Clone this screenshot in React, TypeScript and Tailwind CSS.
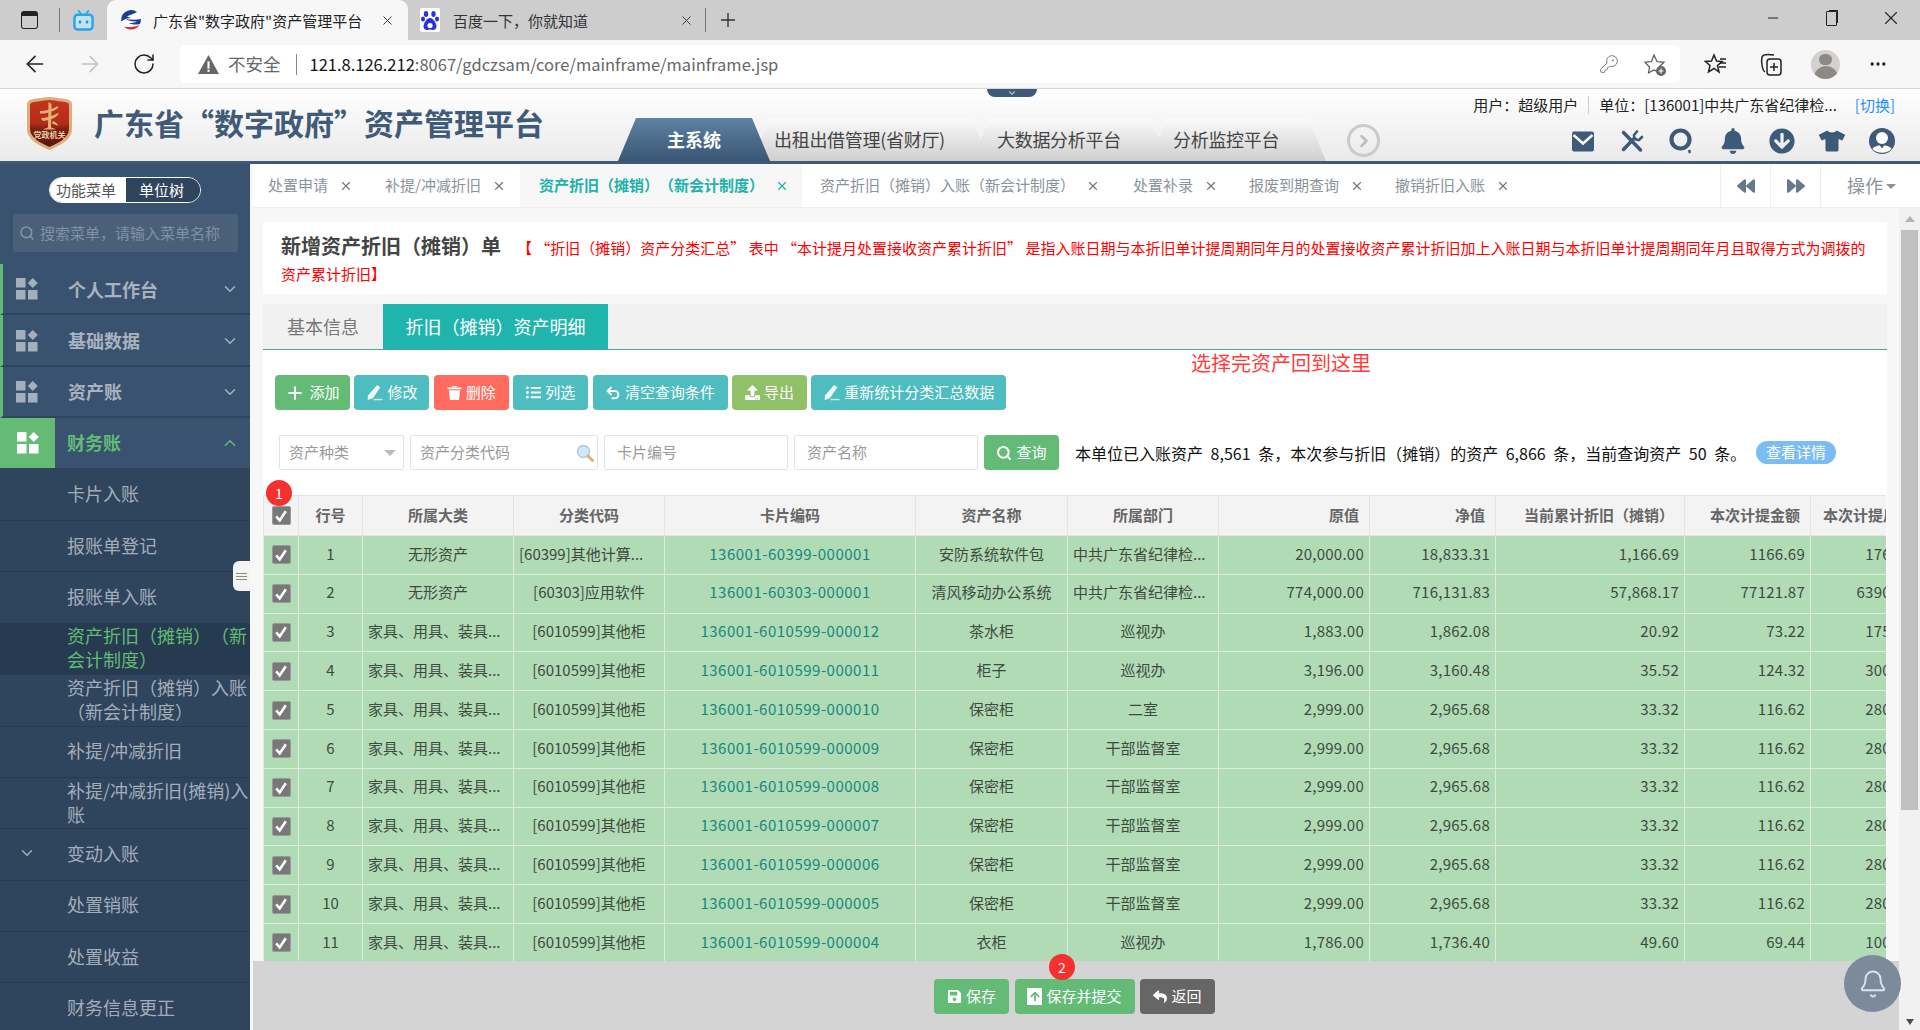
import React from "react";
import { ArrowLeft, ArrowRight, RotateCw, KeyRound, X, Minus, Plus, MoreHorizontal, ChevronDown, ChevronUp, ChevronRight, Search, Bell, Undo2 } from "lucide-react";
import { FaListUl, FaUpload, FaSave, FaReply, FaBell, FaTshirt, FaArrowCircleDown, FaBackward, FaForward, FaArrowUp } from "react-icons/fa";

const FONT = "[font-family:'Noto_Sans_CJK_SC','Liberation_Sans',sans-serif] [text-spacing-trim:space-all]";

function GridIcon({ className }: { className?: string }) {
  return (
    <svg viewBox="0 0 22 22" className={className} fill="currentColor">
      <rect x="0" y="0" width="9.5" height="9.5" />
      <rect x="0" y="12" width="9.5" height="9.5" />
      <rect x="12" y="12" width="9.5" height="9.5" />
      <path d="M16.7 0 L21.8 5 L16.7 10 L11.8 5 Z" />
    </svg>
  );
}

function PenIcon() {
  return (
    <svg viewBox="0 0 16 16" className="w-[17px] h-[17px]" fill="currentColor">
      <path d="M10.5 1 L13.500 3 L6.500 13.500 L1.500 15 L2 10.500 Z" opacity="0.9" />
      <rect x="7" y="14" width="8.500" height="1.300" opacity="0.7" />
    </svg>
  );
}

function TrashIcon() {
  return (
    <svg viewBox="0 0 16 16" className="w-[15px] h-[16px]" fill="currentColor">
      <rect x="0.500" y="2" width="15" height="2" rx="0.500" />
      <rect x="5.500" y="0.500" width="5" height="1.500" />
      <path d="M2 5 H14 L12.800 15.500 H3.200 Z" />
    </svg>
  );
}

function Logo() {
  return (
    <svg viewBox="0 0 45 53" className="w-[45px] h-[53px]">
      <defs>
        <linearGradient id="shieldFill" x1="0" y1="0" x2="0" y2="1">
          <stop offset="0" stopColor="#c5341d" />
          <stop offset="0.5" stopColor="#b42c18" />
          <stop offset="0.62" stopColor="#7d1f12" />
          <stop offset="1" stopColor="#5a150c" />
        </linearGradient>
      </defs>
      <path d="M22.5 0 C30 0.800 38 1.500 42 3 C44 4 45 5 45 8 L45 32 C45 43 32 49 22.5 53 C13 49 0 43 0 32 L0 8 C0 5 1 4 3 3 C7 1.500 15 0.800 22.5 0 Z" fill="#dcae7c" />
      <path d="M22.5 3 C29 3.800 36 4.500 40 5.500 C41.500 6 42 7 42 9 L42 32 C42 41 31 46 22.5 50 C14 46 3 41 3 32 L3 9 C3 7 3.500 6 5 5.500 C9 4.500 16 3.800 22.5 3 Z" fill="url(#shieldFill)" />
      <path d="M21.500 5 L24.500 7 L24 30 C24 31 28 31.500 29 32.500 L16 32.500 C17 31.500 21 31 21 30 Z" fill="#e4b07a" />
      <path d="M13 14 C18 14 26 12 31 9 L31 11 C26 15 18 17 13 16.500 Z M14 21 C19 21 26 19 32 15.500 C31 20 25 23 16 24 C15 23 14.500 22 14 21 Z M26 24 C29 25 31 27 31 29 C29 28 27 27 25 26.500 Z" fill="#e4b07a" />
      <text x="22.5" y="41" textAnchor="middle" fontSize="8" fontWeight="700" fill="#ecd0a6" fontFamily="'Noto Sans CJK SC',sans-serif">党政机关</text>
    </svg>
  );
}

function SiteIcon() {
  return (
    <svg viewBox="0 0 20 20" className="w-[20px] h-[20px]">
      <circle cx="10" cy="10" r="10" fill="#fff" />
      <path d="M16 2 A10 10 0 0 0 0.300 11.500 C3 9 7 8 10 8 L6 6.500 C9 4.500 13 4 16 2 Z" fill="#1c3f94" />
      <path d="M4 8.500 C8 10 15 10 19.900 9 A10 10 0 0 1 19 14 C15 15 10 14.500 8 13 C11 13 14 12.500 16 11.500 C12 11.500 7 11 4 8.500 Z" fill="#1c3f94" />
      <path d="M3 16.500 C8 18 14 17 18.500 15 A10 10 0 0 1 3 16.500 Z" fill="#d9252a" />
    </svg>
  );
}

function BaiduIcon() {
  return (
    <svg viewBox="0 0 20 24" className="w-[20px] h-[24px]">
      <rect width="20" height="24" rx="2" fill="#fff" />
      <g fill="#2932e1">
        <ellipse cx="6" cy="6" rx="2.2" ry="3" />
        <ellipse cx="13.5" cy="6" rx="2.2" ry="3" />
        <ellipse cx="3" cy="11" rx="2" ry="2.6" />
        <ellipse cx="17" cy="11" rx="2" ry="2.6" />
        <path d="M10 10 C13 10 16.5 15 16.5 18.5 C16.5 22 13 22.5 10 21.5 C7 22.5 3.5 22 3.5 18.5 C3.5 15 7 10 10 10 Z" />
      </g>
      <circle cx="10" cy="17.5" r="2.6" fill="#fff" />
    </svg>
  );
}

function Chrome() {
  return (
    <div className="shrink-0">
      <div className="h-[40px] bg-[#cdcdcd] flex items-end relative">
        <div className="w-[59px] h-[40px] flex items-center justify-center">
          <div className="w-[17px] h-[18px] rounded-[3px] border-[1.5px] border-[#222] border-t-[5px]" />
        </div>
        <div className="w-px h-[24px] bg-[#777] mb-[8px]" />
        <div className="w-[47px] h-[40px] flex items-center justify-center">
          <svg viewBox="0 0 22 22" className="w-[21px] h-[21px]">
            <path d="M6 1 L9 5 M16 1 L13 5" stroke="#2aa6e8" strokeWidth="2" strokeLinecap="round" />
            <rect x="1.500" y="5" width="19" height="15.500" rx="3.500" fill="#bfe3f5" stroke="#2aa6e8" strokeWidth="2.600" />
            <rect x="6" y="11" width="2.600" height="3.200" rx="1" fill="#2a8fd0" />
            <rect x="13.400" y="11" width="2.600" height="3.200" rx="1" fill="#2a8fd0" />
          </svg>
        </div>
        <div className="w-[301px] h-[40px] bg-[#f7f7f7] rounded-t-[9px] flex items-center pl-[14px] text-[15px] text-[#222]">
          <SiteIcon />
          <span className="ml-[12px] w-[227px] whitespace-nowrap leading-none">广东省"数字政府"资产管理平台</span>
          <X className="w-[15px] h-[15px] text-[#333]" strokeWidth={1.5} />
        </div>
        <div className="w-[297px] h-[40px] flex items-center pl-[12px] text-[15px] text-[#333]">
          <BaiduIcon />
          <span className="ml-[13px] w-[226px] whitespace-nowrap leading-none">百度一下，你就知道</span>
          <X className="w-[15px] h-[15px] text-[#333]" strokeWidth={1.5} />
        </div>
        <div className="w-px h-[24px] bg-[#777] mb-[8px]" />
        <div className="w-[44px] h-[40px] flex items-center justify-center">
          <Plus className="w-[22px] h-[22px] text-[#333]" strokeWidth={1.5} />
        </div>
        <div className="flex-1" />
        <div className="flex items-center h-[40px] pb-[4px] text-[#222]">
          <Minus className="w-[16px] h-[16px]" strokeWidth={1.5} />
          <div className="w-[11px] h-[15px] border-[1.5px] border-[#222] rounded-[1px] ml-[45px] mr-[43px] shadow-[2px_-2px_0_-1px_#222]" />
          <X className="w-[22px] h-[22px] mr-[18px]" strokeWidth={1.2} />
        </div>
      </div>
      <div className="h-[49px] bg-[#f7f7f7] border-b border-[#d6d6d6] flex items-center">
        <div className="w-[180px] flex items-center text-[#222]">
          <ArrowLeft className="ml-[22px] w-[26px] h-[26px]" strokeWidth={1.5} />
          <ArrowRight className="ml-[29px] w-[26px] h-[26px] text-[#c4c4c4]" strokeWidth={1.5} />
          <RotateCw className="ml-[29px] w-[24px] h-[24px]" strokeWidth={1.5} />
        </div>
        <div className="w-[1500px] h-[38px] bg-white rounded-[6px] flex items-center text-[16.5px] leading-none">
          <svg viewBox="0 0 20 20" className="w-[21px] h-[21px] ml-[18px]">
            <path d="M10 1 L20 19 L0 19 Z" fill="#666" />
            <rect x="9" y="7" width="2" height="7" fill="#fff" />
            <rect x="9" y="15" width="2" height="2" fill="#fff" />
          </svg>
          <span className="ml-[9px] text-[#666] text-[17.5px]">不安全</span>
          <div className="w-px h-[21px] bg-[#888] ml-[15px]" />
          <span className="ml-[13px] text-[#111]">121.8.126.212</span>
          <span className="text-[#666]">:8067/gdczsam/core/mainframe/mainframe.jsp</span>
          <div className="flex-1" />
          <KeyRound className="w-[20px] h-[20px] text-[#777]" strokeWidth={1.2} />
          <svg viewBox="0 0 24 24" className="w-[24px] h-[24px] ml-[24px] mr-[13px]" fill="none" stroke="#555" strokeWidth="1.200">
            <path d="M11 3 L14 9.5 L21 10.3 L16 15 L17 21 L11 18 L5.500 21 L6.500 15 L2 10.300 L8.500 9.500 Z" />
            <circle cx="18" cy="19" r="5" fill="#666" stroke="none" />
            <path d="M18 16.500 V21.500 M15.500 19 H20.500" stroke="#fff" />
          </svg>
        </div>
        <svg viewBox="0 0 24 24" className="w-[24px] h-[24px] ml-[24px]" fill="none" stroke="#222" strokeWidth="1.500">
          <path d="M10 3 L12.500 9 L18 9.500 L13.500 13.500 L15 20 L10 16.500 L4.500 20 L6 13.500 L1.500 9.500 L7.500 9 Z" />
          <path d="M16 7 H22 M16 11 H22 M15 15 H22" />
        </svg>
        <svg viewBox="0 0 24 24" className="w-[24px] h-[26px] ml-[31px]" fill="none" stroke="#222" strokeWidth="1.500">
          <path d="M6 20 C3 18 2 9 3 5 C4 2 9 2 15 3" />
          <rect x="8" y="7" width="14" height="16" rx="3" />
          <path d="M15 11 V19 M11 15 H19" />
        </svg>
        <div className="w-[29px] h-[29px] rounded-full bg-[#d2d1cd] ml-[28px] relative overflow-hidden flex flex-col items-center">
          <div className="w-[13px] h-[13px] rounded-full bg-[#8d8a85] mt-[4px]" />
          <div className="w-[24px] h-[14px] rounded-t-full bg-[#8d8a85] mt-[1px]" />
        </div>
        <MoreHorizontal className="w-[20px] h-[20px] ml-[28px] text-[#222]" />
      </div>
    </div>
  );
}

const navColor = "text-[#3d5a78]";

function Header() {
  const tabClass = "absolute inset-0 [clip-path:polygon(18px_0,calc(100%-18px)_0,100%_100%,0_100%)]";
  return (
    <div className="h-[75px] shrink-0 bg-gradient-to-b from-white to-[#eaeaea] border-b-[3px] border-[#3d5a78] flex relative">
      <div className="ml-[27px] mt-[8px]"><Logo /></div>
      <div className="ml-[22px] mt-[11px] text-[30px] font-bold leading-[44px] text-[#3f5b79] whitespace-nowrap w-[524px]">
        广东省“数字政府”资产管理平台
      </div>
      <div className="flex items-end mt-[29px] h-[43px]">
        <div className="w-[152px] h-[43px] relative flex items-center justify-center text-white font-bold text-[18px] z-10">
          <div className={`${tabClass} bg-gradient-to-b from-[#5f83a3] to-[#3a5574]`} />
          <span className="relative">主系统</span>
        </div>
        {[
          ["出租出借管理(省财厅)", "w-[238px] -ml-[18px]", "pl-[22px] tracking-[-0.3px]"],
          ["大数据分析平台", "w-[196px] -ml-[18px]", "pl-[25px] tracking-[-0.3px]"],
          ["分析监控平台", "w-[177px] -ml-[19px]", "pl-[24px] tracking-[-0.3px]"],
        ].map(([t, w, p]) => (
          <div key={t} className={`${w} h-[43px] relative flex items-center text-[#444] text-[18px] whitespace-nowrap`}>
            <div className={`${tabClass} bg-gradient-to-b from-[#fbfbfb] to-[#cfcfcf]`} />
            <span className={`relative ${p}`}>{t}</span>
          </div>
        ))}
        <div className="w-[33px] h-[33px] rounded-full border-[3px] border-[#cbcbcb] ml-[21px] mb-[4px] flex items-center justify-center text-[#bdbdbd]">
          <ChevronRight className="w-[20px] h-[20px]" strokeWidth={3} />
        </div>
      </div>
      <div className="absolute right-[28px] top-[6px] flex flex-col items-end">
        <div className="flex items-center text-[15px] leading-[20px] text-[#222] whitespace-nowrap h-[20px]">
          <span>用户：超级用户</span>
          <div className="w-px h-[18px] bg-[#ccc] mx-[10px]" />
          <span>单位：[136001]中共广东省纪律检...</span>
          <span className="text-[#1e90ff] ml-[18px] -mr-[3px]">[切换]</span>
        </div>
      </div>
      <div className={`absolute top-[39px] left-[1571px] flex items-center ${navColor}`}>
        <svg viewBox="0 0 24 24" className="w-[24px] h-[24px]">
          <rect x="1" y="2.500" width="22" height="20" rx="2" fill="#3d5a78" />
          <path d="M2.500 6 L12 14.500 L21.500 6" fill="none" stroke="#fff" strokeWidth="2.500" />
        </svg>
        <svg viewBox="0 0 24 24" className="w-[24px] h-[24px] ml-[25px]" fill="none" stroke="#3d5a78" strokeLinecap="round">
          <path d="M3.500 3.500 L20.500 21" strokeWidth="3.500" />
          <path d="M3.500 20.500 L13.500 10" strokeWidth="3.500" />
          <path d="M14 6 A4.500 4.500 0 0 0 19 11 L22 8 M14 6 L17 2.500" strokeWidth="2.600" />
        </svg>
        <svg viewBox="0 0 24 26" className="w-[24px] h-[26px] ml-[25px]" fill="none" stroke="#3d5a78" strokeWidth="4.200">
          <circle cx="11.500" cy="11.500" r="9" />
          <path d="M20 22 L21 25" strokeWidth="2.500" />
        </svg>
        <FaBell className="w-[24px] h-[26px] ml-[28px]" />
        <FaArrowCircleDown className="w-[26px] h-[26px] ml-[24px]" />
        <FaTshirt className="w-[26px] h-[24px] ml-[24px]" />
        <svg viewBox="0 0 26 26" className="w-[26px] h-[26px] ml-[24px]">
          <circle cx="13" cy="13" r="13" fill="#3d5a78" />
          <circle cx="13" cy="10" r="6" fill="#fff" />
          <path d="M3.500 21 C6 16 20 16 22.500 21 C18 26 8 26 3.500 21 Z" fill="#fff" />
          <path d="M10.500 17 L15.500 17 L13 20.500 Z" fill="#3d5a78" />
        </svg>
      </div>
      <div className="absolute left-[987px] top-0 w-[50px] h-[8px] bg-[#3d5a78] rounded-b-[8px] flex items-center justify-center">
        <ChevronDown className="w-[10px] h-[10px] text-[#aab8c7]" strokeWidth={3} />
      </div>
    </div>
  );
}

const subs: [string, boolean?][] = [
  ["卡片入账"],
  ["报账单登记"],
  ["报账单入账"],
  ["资产折旧（摊销）（新会计制度）", true],
  ["资产折旧（摊销）入账（新会计制度）"],
  ["补提/冲减折旧"],
  ["补提/冲减折旧(摊销)入账"],
];

function Sidebar() {
  return (
    <div className="w-[250px] shrink-0 bg-[#2f445d] h-full overflow-hidden relative">
      <div className="bg-[#39526f] h-[100px] flex flex-col items-center">
        <div className="mt-[13px] w-[152px] h-[26px] rounded-full border border-white flex overflow-hidden text-[15px] leading-[24px] text-center">
          <div className="w-[76px] bg-white text-[#555] pr-[4px]">功能菜单</div>
          <div className="flex-1 bg-[#2f445d] text-white pr-[3px]">单位树</div>
        </div>
        <div className="mt-[11px] ml-[1px] w-[225px] h-[38px] rounded-[3px] bg-[#4a6079] flex items-center pl-[6px] text-[15px] text-[#8091a4] whitespace-nowrap">
          <Search className="w-[16px] h-[16px] mr-[5px]" strokeWidth={2.5} />
          搜索菜单，请输入菜单名称
        </div>
      </div>
      {["个人工作台", "基础数据", "资产账"].map((t) => (
        <div key={t} className="h-[51.4px] pt-[1px] bg-[#39526f] border-b-2 border-[#2f445d] border-l-[3px] border-l-[#63bb76] flex items-center text-[#a8b3bf] font-bold text-[18px]">
          <GridIcon className="w-[22px] h-[22px] ml-[13px] text-[#a3afbb]" />
          <span className="ml-[30px] flex-1">{t}</span>
          <ChevronDown className="w-[18px] h-[18px] mr-[11px]" strokeWidth={2} />
        </div>
      ))}
      <div className="h-[51.4px] bg-[#39526f] border-b-2 border-[#2f445d] flex items-center font-bold text-[18px] text-[#63bb76]">
        <div className="w-[55px] h-full bg-[#63bb76] flex items-center justify-center text-white">
          <GridIcon className="w-[22px] h-[22px]" />
        </div>
        <span className="ml-[12px] flex-1">财务账</span>
        <ChevronUp className="w-[18px] h-[18px] mr-[11px]" strokeWidth={2} />
      </div>
      {subs.map(([t, active]) => (
        <div key={t} className={`h-[51.4px] pb-[3px] border-b border-[#283b52] flex items-center pl-[67px] text-[18px] leading-[24px] ${active ? "bg-[#263a50] text-[#63bb76]" : "text-[#a3aeba]"}`}>
          <span className="-mr-[2px] w-[182px] break-all">{t}</span>
        </div>
      ))}
      <div className="h-[51.4px] pb-[2px] border-b border-[#283b52] flex items-center text-[18px] text-[#a3aeba]">
        <ChevronDown className="w-[18px] h-[18px] ml-[18px] mr-[31px]" strokeWidth={2} />
        变动入账
      </div>
      {["处置销账", "处置收益", "财务信息更正"].map((t) => (
        <div key={t} className="h-[51.4px] pb-[2px] border-b border-[#283b52] flex items-center pl-[67px] text-[18px] text-[#a3aeba]">{t}</div>
      ))}
      <div className="absolute left-[233px] top-[397px] w-[17px] h-[30px] bg-[#f3f3f3] rounded-l-[6px] flex flex-col items-center justify-center gap-[2px]">
        <div className="w-[11px] h-[1px] bg-[#888]" />
        <div className="w-[11px] h-[1px] bg-[#888]" />
        <div className="w-[11px] h-[1px] bg-[#888]" />
      </div>
    </div>
  );
}

function TopTabs() {
  const tabs: [string, string, boolean?][] = [
    ["处置申请", "w-[117px] pl-[15px]"],
    ["补提/冲减折旧", "w-[150px] pl-[15px]"],
    ["资产折旧（摊销）（新会计制度）", "w-[282px] pl-[19px]", true],
    ["资产折旧（摊销）入账（新会计制度）", "w-[313px] pl-[18px]"],
    ["处置补录", "w-[116px] pl-[18px]"],
    ["报废到期查询", "w-[146px] pl-[18px]"],
    ["撤销折旧入账", "w-[200px] pl-[18px]"],
  ];
  return (
    <div className="h-[44px] shrink-0 bg-white border-b border-[#eee] flex text-[15px] text-[#8a939c]">
      {tabs.map(([t, w, a]) => (
        <div key={t} className={`${w} h-full flex items-center whitespace-nowrap ${a ? "bg-[#f7f7f7] text-[#20b2aa] font-bold" : ""}`}>
          <span>{t}</span>
          <X className={`w-[14px] h-[14px] ml-[11px] ${a ? "text-[#20b2aa]" : "text-[#777]"}`} strokeWidth={2} />
        </div>
      ))}
      <div className="flex-1" />
      <div className="w-[50px] border-l border-[#eee] flex items-center justify-center text-[#65788c]"><FaBackward className="w-[18px] h-[18px]" /></div>
      <div className="w-[50px] border-l border-[#eee] flex items-center justify-center text-[#65788c]"><FaForward className="w-[18px] h-[18px]" /></div>
      <div className="w-[100px] border-l border-[#eee] flex items-center pl-[26px] text-[18px] text-[#8a939c]">
        操作
        <div className="ml-[3px] mt-[2px] border-x-[5px] border-x-transparent border-t-[5px] border-t-[#8a939c]" />
      </div>
    </div>
  );
}

function Btn({ cls, icon, children }: { cls: string; icon: React.ReactNode; children: React.ReactNode }) {
  return (
    <div className={`h-[35px] rounded-[4px] flex items-center justify-center text-white text-[15px] gap-[4px] whitespace-nowrap ${cls}`}>
      {icon}
      <span>{children}</span>
    </div>
  );
}

const rows = [
  ["1", "无形资产", "[60399]其他计算...", "136001-60399-000001", "安防系统软件包", "中共广东省纪律检...", "20,000.00", "18,833.31", "1,166.69", "1166.69", "1760.00"],
  ["2", "无形资产", "[60303]应用软件", "136001-60303-000001", "清风移动办公系统", "中共广东省纪律检...", "774,000.00", "716,131.83", "57,868.17", "77121.87", "63900.00"],
  ["3", "家具、用具、装具...", "[6010599]其他柜", "136001-6010599-000012", "茶水柜", "巡视办", "1,883.00", "1,862.08", "20.92", "73.22", "1757.00"],
  ["4", "家具、用具、装具...", "[6010599]其他柜", "136001-6010599-000011", "柜子", "巡视办", "3,196.00", "3,160.48", "35.52", "124.32", "3000.00"],
  ["5", "家具、用具、装具...", "[6010599]其他柜", "136001-6010599-000010", "保密柜", "二室", "2,999.00", "2,965.68", "33.32", "116.62", "2800.00"],
  ["6", "家具、用具、装具...", "[6010599]其他柜", "136001-6010599-000009", "保密柜", "干部监督室", "2,999.00", "2,965.68", "33.32", "116.62", "2800.00"],
  ["7", "家具、用具、装具...", "[6010599]其他柜", "136001-6010599-000008", "保密柜", "干部监督室", "2,999.00", "2,965.68", "33.32", "116.62", "2800.00"],
  ["8", "家具、用具、装具...", "[6010599]其他柜", "136001-6010599-000007", "保密柜", "干部监督室", "2,999.00", "2,965.68", "33.32", "116.62", "2800.00"],
  ["9", "家具、用具、装具...", "[6010599]其他柜", "136001-6010599-000006", "保密柜", "干部监督室", "2,999.00", "2,965.68", "33.32", "116.62", "2800.00"],
  ["10", "家具、用具、装具...", "[6010599]其他柜", "136001-6010599-000005", "保密柜", "干部监督室", "2,999.00", "2,965.68", "33.32", "116.62", "2800.00"],
  ["11", "家具、用具、装具...", "[6010599]其他柜", "136001-6010599-000004", "衣柜", "巡视办", "1,786.00", "1,736.40", "49.60", "69.44", "1000.00"],
];

function Check() {
  return (
    <div className="w-[19px] h-[19px] mx-auto rounded-[2px] bg-[#787878] flex items-center justify-center border border-[#999]">
      <svg viewBox="0 0 16 16" className="w-[14px] h-[14px]" fill="none" stroke="#fff" strokeWidth="3"><path d="M2.500 8.500 L6.500 13 L13.500 2.500" /></svg>
    </div>
  );
}

function cellClass(i: number, c: string) {
  if (i === 3) return "text-center text-[#14877f] tracking-[0.5px] pb-[2px]";
  if (i >= 6) return "text-right pr-[5px] tracking-[0.25px] pb-[2px]";
  if (c.endsWith("...")) return "text-left pl-[5px] pb-[2px]";
  return "text-center pb-[2px]";
}

function DataTable() {
  const widths = ["w-[35px]", "w-[64px]", "w-[151px]", "w-[151px]", "w-[251px]", "w-[152px]", "w-[151px]", "w-[151px]", "w-[126px]", "w-[189px]", "w-[126px]", "w-[116px]"];
  const heads = ["行号", "所属大类", "分类代码", "卡片编码", "资产名称", "所属部门", "原值", "净值", "当前累计折旧（摊销）", "本次计提金额", "本次计提后净值"];
  return (
    <div className="overflow-hidden w-[1623px] relative">
      <table className="table-fixed w-[1663px] border-collapse text-[15px]">
        <colgroup>{widths.map((w, i) => <col key={i} className={w} />)}</colgroup>
        <thead>
          <tr className="h-[40px] bg-[#f3f3f3] text-[#666] font-bold border-t border-[#e4e4e4]">
            <th className="border border-[#e4e4e4] font-normal"><Check /></th>
            {heads.map((h, i) => (
              <th key={h} className={`border border-[#e4e4e4] whitespace-nowrap overflow-hidden pb-[1px] ${i === 10 ? "text-left pl-[12px]" : i >= 6 ? "text-right pr-[10px]" : "text-center"}`}>{h}</th>
            ))}
          </tr>
        </thead>
        <tbody>
          {rows.map((r) => (
            <tr key={r[0]} className="h-[38.8px] bg-[#b0dbb5] text-[#3f4a3f]">
              <td className="border border-[#dcebdd]"><Check /></td>
              {r.map((c, i) => (
                <td key={i} className={`border border-[#dcebdd] whitespace-nowrap overflow-hidden ${cellClass(i, c)}`}>{c}</td>
              ))}
            </tr>
          ))}
        </tbody>
      </table>
    </div>
  );
}

function Content() {
  return (
    <div className="flex-1 min-h-0 overflow-hidden bg-[#f7f7f7] pl-[10px] pt-[14px] relative">
      <div className="w-[1624px] h-[72px] bg-white pl-[18px] pr-[20px] pt-[11px] text-[15px] leading-[26px] text-[#ff0000]">
        <span className="text-[20px] font-bold text-[#444] mr-[16px]">新增资产折旧（摊销）单</span>
        【 “折旧（摊销）资产分类汇总” 表中 “本计提月处置接收资产累计折旧” 是指入账日期与本折旧单计提周期同年月的处置接收资产累计折旧加上入账日期与本折旧单计提周期同年月且取得方式为调拨的资产累计折旧】
      </div>
      <div className="w-[1624px] mt-[10px] bg-white">
        <div className="h-[46px] bg-[#f1f1f1] border-b border-[#3fa99c] flex text-[18px]">
          <div className="w-[120px] h-[45px] flex items-center justify-center text-[#777]">基本信息</div>
          <div className="w-[225px] h-[45px] flex items-center justify-center bg-[#1fb5ac] text-white">折旧（摊销）资产明细</div>
        </div>
        <div className="h-[25px] pl-[928px] text-[20px] leading-[26px] text-[#ff3b3b]">选择完资产回到这里</div>
        <div className="flex gap-[4.4px] pl-[12px]">
          <Btn cls="w-[75px] bg-[#63bb76]" icon={<Plus className="w-[20px] h-[20px]" strokeWidth={2.500} />}>添加</Btn>
          <Btn cls="w-[75px] bg-[#4dbdbf]" icon={<PenIcon />}>修改</Btn>
          <Btn cls="w-[75px] bg-[#ff6b5e]" icon={<TrashIcon />}>删除</Btn>
          <Btn cls="w-[75px] bg-[#4dbdbf]" icon={<FaListUl className="w-[15px] h-[15px]" />}>列选</Btn>
          <Btn cls="w-[135px] bg-[#4dbdbf]" icon={<Undo2 className="w-[16px] h-[16px]" strokeWidth={3} />}>清空查询条件</Btn>
          <Btn cls="w-[75px] bg-[#90c068]" icon={<FaUpload className="w-[15px] h-[15px]" />}>导出</Btn>
          <Btn cls="w-[195px] bg-[#4dbdbf]" icon={<PenIcon />}>重新统计分类汇总数据</Btn>
        </div>
        <div className="mt-[25px] h-[35px] flex items-center pl-[16px] text-[15px]">
          <div className="w-[125px] h-[35px] border border-[#e2e2e2] rounded-[2px] flex items-center pl-[9px] text-[#999]">
            <span className="flex-1">资产种类</span>
            <div className="mr-[7px] border-x-[6px] border-x-transparent border-t-[6px] border-t-[#bbb]" />
          </div>
          <div className="ml-[6px] w-[188px] h-[35px] border border-[#e2e2e2] rounded-[2px] flex items-center pl-[9px] text-[#999]">
            <span className="flex-1">资产分类代码</span>
            <svg viewBox="0 0 18 18" className="w-[18px] h-[18px] mr-[3px]">
              <circle cx="7.500" cy="7.500" r="6" fill="#d3e8f7" stroke="#a8cbe6" strokeWidth="1.500" />
              <path d="M12 12 L16.500 16.500" stroke="#e0b070" strokeWidth="3" strokeLinecap="round" />
            </svg>
          </div>
          <div className="ml-[6px] w-[184px] h-[35px] border border-[#e2e2e2] rounded-[2px] flex items-center pl-[12px] text-[#999]">卡片编号</div>
          <div className="ml-[6px] w-[184px] h-[35px] border border-[#e2e2e2] rounded-[2px] flex items-center pl-[12px] text-[#999]">资产名称</div>
          <Btn cls="ml-[6px] w-[75px] bg-[#63bb76]" icon={<Search className="w-[16px] h-[16px]" strokeWidth={3} />}>查询</Btn>
          <span className="ml-[16px] text-[16px] [word-spacing:4px] text-[#111] whitespace-nowrap w-[681px]">本单位已入账资产 8,561 条，本次参与折旧（摊销）的资产 6,866 条，当前查询资产 50 条。</span>
          <div className="w-[80px] h-[23px] rounded-full bg-[#7cbcf5] text-white text-center leading-[22px]">查看详情</div>
        </div>
        <div className="mt-[25px] relative">
          <DataTable />
          <div className="absolute left-[3px] -top-[15px] w-[26px] h-[26px] rounded-full bg-[#f5302f] text-white text-[14px] leading-[26px] text-center z-10">1</div>
        </div>
      </div>
    </div>
  );
}

function Footer() {
  return (
    <div className="h-[69px] shrink-0 bg-[#d4d4d4] flex justify-start gap-[5.500px] pl-[681px] pt-[18px] relative">
      <Btn cls="w-[75px] bg-[#63bb76]" icon={<FaSave className="w-[15px] h-[15px]" />}>保存</Btn>
      <Btn cls="w-[120px] bg-[#63bb76]" icon={
        <div className="w-[15px] h-[17px] bg-white flex items-center justify-center text-[#63bb76]"><FaArrowUp className="w-[10px] h-[11px]" /></div>
      }>保存并提交</Btn>
      <Btn cls="w-[75px] bg-[#666]" icon={<FaReply className="w-[14px] h-[15px]" />}>返回</Btn>
      <div className="absolute left-[796px] -top-[7px] w-[26px] h-[26px] rounded-full bg-[#f5302f] text-white text-[14px] leading-[26px] text-center">2</div>
    </div>
  );
}

function Scrollbar() {
  return (
    <div className="w-[21px] shrink-0 bg-[#f1f1f1] flex flex-col items-center h-full relative">
      <div className="h-[22px] flex items-center justify-center">
        <div className="border-x-[5px] border-x-transparent border-b-[6px] border-b-[#b3b3b3]" />
      </div>
      <div className="w-[17px] h-[580px] bg-[#c1c1c1]" />
      <div className="flex-1" />
      <div className="h-[17px] flex items-center justify-center">
        <div className="border-x-[4px] border-x-transparent border-t-[6px] border-t-[#505050]" />
      </div>
    </div>
  );
}

export default function App() {
  return (
    <div className={`w-[1920px] h-[1030px] overflow-hidden flex flex-col bg-white relative ${FONT}`}>
      <Chrome />
      <Header />
      <div className="flex-1 min-h-0 flex">
        <Sidebar />
        <div className="w-[3px] shrink-0 bg-[#f7f7f7]" />
        <div className="flex-1 min-w-0 flex flex-col">
          <TopTabs />
          <div className="flex-1 min-h-0 flex">
            <div className="flex-1 min-w-0 flex flex-col">
              <Content />
              <Footer />
            </div>
            <Scrollbar />
          </div>
        </div>
      </div>
      <div className="absolute left-[1844px] top-[955px] w-[57px] h-[57px] rounded-full bg-[#7b8b9c] flex items-center justify-center">
        <Bell className="w-[30px] h-[32px] text-[#dfe4e9]" strokeWidth={1.5} />
      </div>
    </div>
  );
}
